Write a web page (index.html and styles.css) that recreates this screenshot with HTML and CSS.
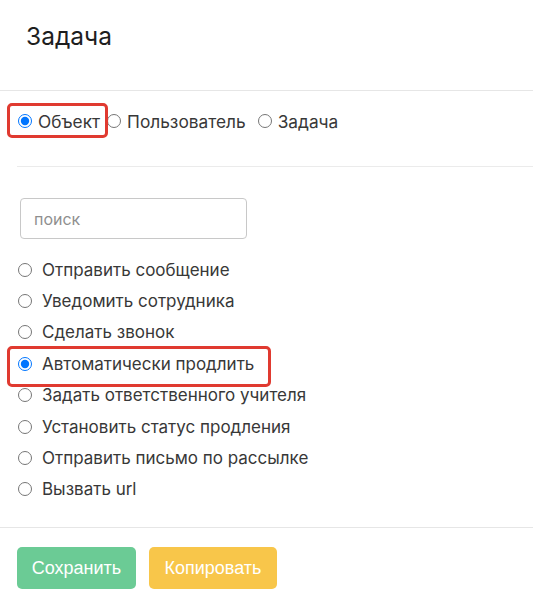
FILE: index.html
```html
<!DOCTYPE html>
<html lang="ru">
<head>
<meta charset="utf-8">
<link rel="stylesheet" href="styles.css">
</head>
<body>
<div class="panel">
  <div class="header"><h1 class="title">Задача</h1></div>
  <div class="types">
    <label class="type type-marked"><input type="radio" name="t" checked><span>Объект</span></label>
    <label class="type"><input type="radio" name="t"><span>Пользователь</span></label>
    <label class="type"><input type="radio" name="t"><span>Задача</span></label>
  </div>
  <div class="body">
    <input class="search" type="text" placeholder="поиск">
    <ul class="actions">
      <li><label><input type="radio" name="a"><span>Отправить сообщение</span></label></li>
      <li><label><input type="radio" name="a"><span>Уведомить сотрудника</span></label></li>
      <li><label><input type="radio" name="a"><span>Сделать звонок</span></label></li>
      <li class="marked"><label><input type="radio" name="a" checked><span>Автоматически продлить</span></label></li>
      <li><label><input type="radio" name="a"><span>Задать ответственного учителя</span></label></li>
      <li><label><input type="radio" name="a"><span>Установить статус продления</span></label></li>
      <li><label><input type="radio" name="a"><span>Отправить письмо по рассылке</span></label></li>
      <li><label><input type="radio" name="a"><span>Вызвать url</span></label></li>
    </ul>
  </div>
  <div class="footer">
    <button class="btn btn-save">Сохранить</button>
    <button class="btn btn-copy">Копировать</button>
  </div>
</div>
</body>
</html>
```
FILE: styles.css
```css
* { box-sizing: border-box; }
body {
  margin: 0;
  font-family: Inter, "Noto Sans", sans-serif;
  color: #222;
  background: #fff;
}
.header {
  height: 91px;
  padding: 21px 26px 0;
  border-bottom: 1px solid #e6e6e6;
}
.title {
  margin: 0;
  font-weight: 400;
  font-size: 24.5px;
  line-height: 30px;
  color: #1e1e1e;
}
.types {
  height: 76px;
  margin-left: 17px;
  padding-top: 15px;
  display: flex;
  align-items: flex-start;
  border-bottom: 1px solid #ebebeb;
  font-size: 17.3px;
  color: #383838;
}
.type {
  display: flex;
  align-items: center;
  height: 30px;
  margin-right: 11px;
}
.type input {
  margin: 0 6px 0 1px;
  width: 14px;
  height: 14px;
}
.type-marked {
  position: relative;
  margin-right: 6px;
}
.type-marked::after {
  content: "";
  position: absolute;
  left: -10px;
  top: -3px;
  right: -8px;
  bottom: -2px;
  border: 3px solid #e03a30;
  border-radius: 5px;
}
.body {
  padding: 31px 0 0 20px;
}
.search {
  display: block;
  width: 227px;
  height: 41px;
  border: 1px solid #c8c8c8;
  border-radius: 4px;
  padding: 0 13px;
  font-family: inherit;
  font-size: 16px;
  color: #333;
  outline: none;
}
.search::placeholder { color: #8f8f8f; }
.actions {
  list-style: none;
  margin: 15px 0 0 -2px;
  padding: 0;
  font-size: 17px;
  color: #383838;
}
.actions li {
  height: 31.4px;
  display: flex;
  align-items: center;
}
.actions label {
  display: flex;
  align-items: center;
}
.actions input {
  margin: 0 10px 0 0;
  width: 14px;
  height: 14px;
}
.actions .marked { position: relative; }
.actions .marked::after {
  content: "";
  position: absolute;
  left: -11px;
  top: -2px;
  width: 258px;
  height: 35px;
  border: 3px solid #e03a30;
  border-radius: 5px;
}
.footer {
  margin-top: 22px;
  border-top: 1px solid #e6e6e6;
  padding: 19px 17px;
  display: flex;
  gap: 13px;
}
.btn {
  height: 42px;
  border: none;
  border-radius: 5px;
  color: #fff;
  font-family: "Liberation Sans", Arial, sans-serif;
  font-size: 18px;
  padding: 0 10px;
}
.btn-save { background: #6bcb95; width: 119px; }
.btn-copy { background: #f8c64a; width: 128px; }
```
